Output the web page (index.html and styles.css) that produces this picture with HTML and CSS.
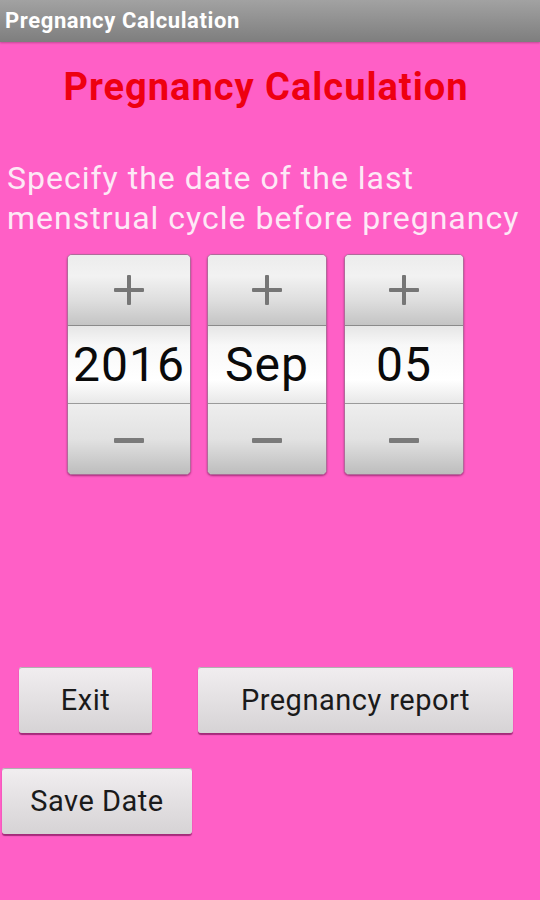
FILE: index.html
```html
<!DOCTYPE html>
<html>
<head>
<meta charset="utf-8">
<link rel="stylesheet" href="styles.css">
</head>
<body>
<div class="titlebar">Pregnancy Calculation</div>
<h1 class="heading">Pregnancy Calculation</h1>
<p class="prompt">Specify the date of the last menstrual cycle before pregnancy</p>
<div class="pickers">
  <div class="picker p-year">
    <div class="inc"><span class="plus"></span></div>
    <div class="value">2016</div>
    <div class="dec"><span class="minus"></span></div>
  </div>
  <div class="picker p-month">
    <div class="inc"><span class="plus"></span></div>
    <div class="value">Sep</div>
    <div class="dec"><span class="minus"></span></div>
  </div>
  <div class="picker p-day">
    <div class="inc"><span class="plus"></span></div>
    <div class="value">05</div>
    <div class="dec"><span class="minus"></span></div>
  </div>
</div>
<div class="row row1">
  <button class="btn btn-exit">Exit</button>
  <button class="btn btn-report">Pregnancy report</button>
</div>
<div class="row row2">
  <button class="btn btn-save">Save Date</button>
</div>
</body>
</html>
```
FILE: styles.css
```css
html, body {
  margin: 0;
  padding: 0;
}
body {
  width: 540px;
  height: 900px;
  background: #ff5fc6;
  font-family: Roboto, "Noto Sans", sans-serif;
  overflow: hidden;
}
.titlebar {
  height: 42px;
  line-height: 42px;
  padding-left: 5px;
  color: #ffffff;
  font-weight: bold;
  font-size: 22px;
  letter-spacing: 0.6px;
  background: linear-gradient(#a2a2a2, #7e7e7e);
  box-shadow: 0 1px 2px rgba(0,0,0,0.25);
}
.heading {
  margin: 24px 0 0 0;
  text-align: center;
  color: #ee0010;
  font-size: 38px;
  letter-spacing: 1px;
  font-weight: bold;
  line-height: 42px;
  padding-right: 8px;
}
.prompt {
  margin: 50px 0 0 0;
  padding-left: 7px;
  color: #fde9f6;
  font-size: 32px;
  letter-spacing: 1px;
  line-height: 40px;
}
.pickers {
  display: flex;
  margin-top: 16px;
  padding-left: 67px;
}
.picker {
  box-sizing: border-box;
  display: flex;
  flex-direction: column;
  height: 221px;
  border-radius: 5px;
  border: 1px solid #b06a9a;
  box-shadow: 0 1px 2px rgba(80,0,50,0.5);
  overflow: hidden;
  background: #e0e0e0;
}
.p-year { width: 124px; }
.p-month { width: 120px; margin-left: 16px; }
.p-day { width: 120px; margin-left: 17px; }
.inc, .dec {
  height: 70px;
  display: flex;
  align-items: center;
  justify-content: center;
}
.inc {
  background: linear-gradient(#ececec 0%, #f2f2f2 30%, #dedede 65%, #c4c4c4 100%);
  border-bottom: 1px solid #8a8a8a;
}
.dec {
  flex: 1;
  background: linear-gradient(#eeeeee 0%, #e2e2e2 50%, #bdbdbd 100%);
  border-top: 1px solid #9a9a9a;
}
.value {
  height: 77px;
  display: flex;
  align-items: center;
  justify-content: center;
  font-size: 48px;
  letter-spacing: 1px;
  color: #0a0a0a;
  background: linear-gradient(#e6e6e6 0%, #f8f8f8 25%, #ffffff 70%, #e8e8e8 100%);
}
.plus {
  position: relative;
  width: 30px;
  height: 30px;
}
.plus::before, .plus::after {
  content: "";
  position: absolute;
  background: #767676;
  border-radius: 1px;
}
.plus::before {
  left: 0;
  top: 13px;
  width: 30px;
  height: 4px;
}
.plus::after {
  left: 13px;
  top: 0;
  width: 4px;
  height: 30px;
}
.minus {
  width: 30px;
  height: 5px;
  border-radius: 1px;
  background: #7a7a7a;
  margin-top: 2px;
}
.row {
  display: flex;
}
.row1 {
  margin-top: 192px;
  padding-left: 19px;
  gap: 46px;
}
.row2 {
  margin-top: 35px;
  padding-left: 2px;
}
.btn {
  height: 66px;
  border: none;
  border-radius: 3px;
  background: linear-gradient(#f1eef0, #d6d3d5);
  box-shadow: 0 1px 0 #b0b0b0 inset, 0 2px 1px rgba(90,0,60,0.55);
  font-family: Roboto, "Noto Sans", sans-serif;
  font-size: 29px;
  letter-spacing: 0.5px;
  color: #1a1a1a;
  padding: 0;
}
.btn-exit { width: 133px; }
.btn-report { width: 315px; }
.btn-save { width: 190px; }
```
